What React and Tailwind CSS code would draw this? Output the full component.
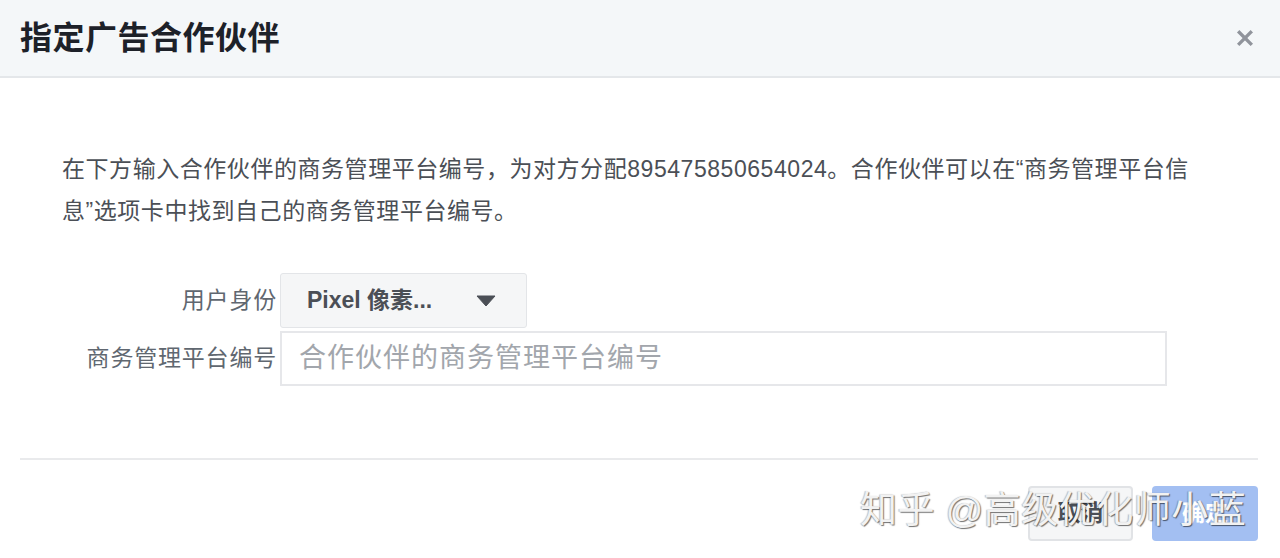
import React from 'react'

const font = { fontFamily: '"Liberation Sans", "Noto Sans CJK SC", sans-serif' }

const CloseIcon = () => (
  <svg className="h-[18px] w-[18px]" viewBox="0 0 16 16" fill="none" stroke="#90949c" strokeWidth="3" strokeLinecap="square">
    <line x1="3" y1="3" x2="13" y2="13" />
    <line x1="13" y1="3" x2="3" y2="13" />
  </svg>
)

const Caret = () => (
  <svg className="h-[12px] w-[20px]" viewBox="0 0 20 12">
    <path d="M1 1h18l-9 10z" fill="#4b4f56" stroke="#4b4f56" strokeWidth="1" strokeLinejoin="round" />
  </svg>
)

const App = () => {
  return (
    <div className="relative h-[558px] w-[1280px] overflow-hidden bg-white font-['Liberation_Sans','Noto_Sans_CJK_SC',sans-serif]">
      {/* Header */}
      <div className="flex h-[78px] items-center justify-between border-b-2 border-[#e4e7ea] bg-[#f4f7f9] pl-[20px] pr-[26px]">
        <h1 className="text-[32px] font-bold tracking-[0.5px] text-[#1d2129]">指定广告合作伙伴</h1>
        <CloseIcon />
      </div>

      {/* Body */}
      <div className="pl-[62px] pt-[70px]">
        <p className="whitespace-nowrap text-[23px] leading-[42px] tracking-[0.55px] text-[#4b4f56]">
          在下方输入合作伙伴的商务管理平台编号，为对方分配895475850654024。合作伙伴可以在“商务管理平台信
          <br />
          息”选项卡中找到自己的商务管理平台编号。
        </p>

        <div className="mt-[41px] flex flex-col gap-[3px]">
          <div className="flex items-center">
            <div className="w-[218px] pr-[3px] text-right text-[23px] tracking-[0.8px] text-[#606770]">用户身份</div>
            <button className="flex h-[55px] w-[247px] items-center justify-between rounded-[3px] border border-[#e3e5e8] bg-[#f5f6f7] pl-[26px] pr-[30px] text-[23px] font-bold text-[#4b4f56]">
              <span>Pixel 像素...</span>
              <Caret />
            </button>
          </div>
          <div className="flex items-center">
            <div className="w-[218px] pr-[3px] text-right text-[23px] tracking-[0.8px] text-[#606770]">商务管理平台编号</div>
            <input
              type="text"
              placeholder="合作伙伴的商务管理平台编号"
              className="h-[55px] w-[887px] border-2 border-[#e6e7ea] bg-white px-[17px] text-[27px] tracking-[1px] text-[#1d2129] outline-none placeholder:text-[#a2a6ac]"
              style={font}
            />
          </div>
        </div>
      </div>

      {/* Divider */}
      <div className="ml-[20px] mr-[22px] mt-[72px] h-[2px] bg-[#e9eaec]" />

      {/* Footer */}
      <div className="flex justify-end gap-[19px] pr-[22px] pt-[26px]">
        <button className="h-[55px] w-[105px] rounded-[4px] border-2 border-[#e1e3e6] bg-[#f5f6f7] text-[23px] font-bold text-[#4b4f56]">
          取消
        </button>
        <button className="h-[55px] w-[106px] rounded-[4px] bg-[#a3bff2] text-[23px] font-bold text-white">
          确定
        </button>
      </div>

      {/* Watermark */}
      <div className="pointer-events-none absolute left-[860px] top-[487px] whitespace-nowrap text-[37px] leading-[48px] tracking-[0.5px] text-[#f2f2f2] [text-shadow:1px_1px_1px_rgba(0,0,0,0.55),-1px_0_1px_rgba(0,0,0,0.25)]">
        知乎 @高级优化师小蓝
      </div>
    </div>
  )
}

export default App
